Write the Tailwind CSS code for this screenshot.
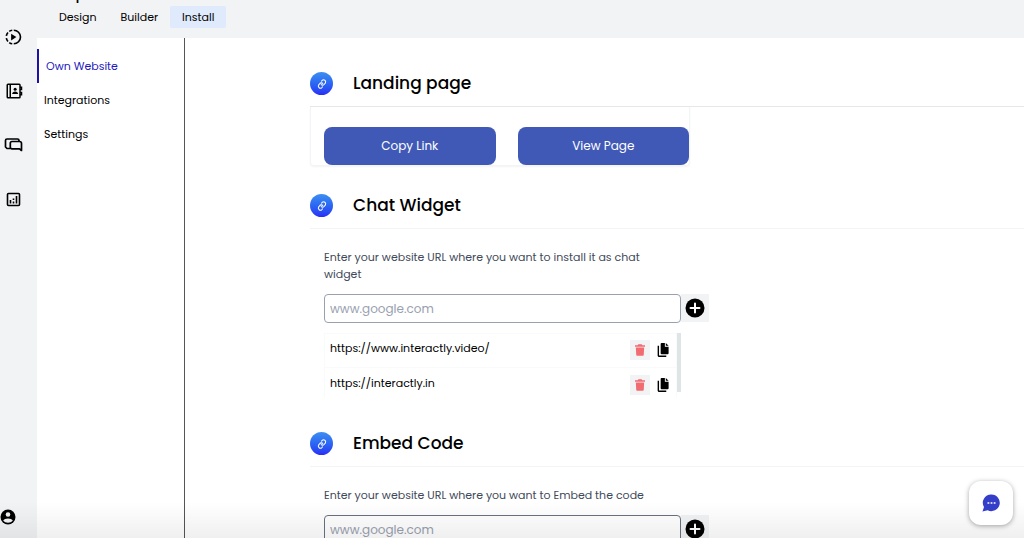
<!DOCTYPE html>
<html lang="en">
<head>
  <meta charset="UTF-8">
  <meta name="viewport" content="width=device-width, initial-scale=1.0">
  <title>Install</title>
  <script src="https://cdn.jsdelivr.net/npm/@tailwindcss/browser@4"></script>
</head>
<body class="flex h-screen overflow-hidden bg-white font-['Poppins','Inter',sans-serif] text-[11px] text-black">
  <!-- Icon rail -->
  <aside class="flex w-[37px] shrink-0 flex-col justify-between bg-[#f2f3f5] pt-7 pb-[13px]">
    <nav class="flex flex-col gap-9">
      <a href="#" aria-label="Videos" class="ml-1 block size-[18px]">
        <svg viewBox="0 0 24 24" class="size-full" fill="none" stroke="black" stroke-width="2.2">
          <path d="M13 3a9 9 0 0 1 0 18"/>
          <path d="M11 3a9 9 0 0 0-4 1.600M5.300 6a9 9 0 0 0-2.200 4.500M3.100 13.500A9 9 0 0 0 5.300 18M7 19.400a9 9 0 0 0 4 1.600"/>
          <path d="M9.500 7.500v9l7-4.500z" fill="black" stroke="none"/>
        </svg>
      </a>
      <a href="#" aria-label="Contacts" class="ml-[5px] block size-[18px]">
        <svg viewBox="0 0 24 24" class="size-full" fill="none" stroke="black" stroke-width="2">
          <rect x="3" y="3" width="17" height="18" rx="1"/>
          <path d="M7 3v18M20 7h2v3h-2M20 14h2v3h-2"/>
          <circle cx="13.500" cy="9.500" r="2" fill="black" stroke="none"/>
          <path d="M9.500 16c0-4.500 8-4.500 8 0z" fill="black" stroke="none"/>
        </svg>
      </a>
      <a href="#" aria-label="Conversations" class="ml-1 block h-[18px] w-[20px]">
        <svg viewBox="0 0 20 18" class="size-full" fill="none" stroke="black" stroke-width="1.700" stroke-linejoin="round">
          <path d="M15 5V4.500Q15 3 13.500 3H3Q1.500 3 1.500 4.500V11l1.500 1.500H6"/>
          <path d="M8 5.500H15.500Q17.500 5.500 17.500 7.500V14.500L15.500 12.800H8Q6.300 12.800 6.300 11V7.200Q6.300 5.500 8 5.500z"/>
        </svg>
      </a>
      <a href="#" aria-label="Analytics" class="ml-1 block size-[18px]">
        <svg viewBox="0 0 18 18" class="size-full" fill="none" stroke="black" stroke-width="1.600">
          <rect x="3.500" y="3.500" width="12" height="12" rx="1"/>
          <path d="M6.500 10v3.500M9.500 11.500v2M9.500 8.500v1.500M12.500 6v7.500"/>
        </svg>
      </a>
    </nav>
    <a href="#" aria-label="Account" class="block size-4">
      <svg viewBox="0 0 16 16" class="size-full">
        <circle cx="8" cy="8" r="7.500" fill="black"/>
        <circle cx="8" cy="5.500" r="2.300" fill="#f2f3f5"/>
        <path d="M3.200 11.500C4.500 8.800 11.500 8.800 12.800 11.500 10.500 14.500 5.500 14.500 3.200 11.500z" fill="#f2f3f5"/>
      </svg>
    </a>
  </aside>

  <div class="flex min-w-0 flex-1 flex-col">
    <header class="flex h-[38px] shrink-0 flex-col justify-end bg-[#f2f3f5] pb-[10px] pl-[10px]">
      <h1 class="mb-[2px] text-[15px] leading-5 font-medium">Simple</h1>
      <nav class="flex h-[22px] shrink-0 leading-[22px]">
        <a href="#" class="px-3">Design</a>
        <a href="#" class="px-3">Builder</a>
        <a href="#" class="rounded-xs bg-[#dfeafc] px-3">Install</a>
      </nav>
    </header>

    <div class="flex min-h-0 flex-1">
      <nav class="flex w-[148px] shrink-0 flex-col border-r border-[#555] pt-[11px] leading-[34px]">
        <a href="#" class="border-l-2 border-[#1d12a8] pl-[7px] text-[#2318c0]">Own Website</a>
        <a href="#" class="pl-[7px]">Integrations</a>
        <a href="#" class="pl-[7px]">Settings</a>
      </nav>

      <main class="min-w-0 flex-1 overflow-hidden pt-[34px] pl-[125px]">
        <section>
          <div class="flex items-center gap-5 border-b border-gray-200 pb-[11px]">
            <span class="flex size-[23px] items-center justify-center rounded-full bg-linear-to-b from-[#3f8ff0] to-[#2b2bf5]">
              <svg viewBox="0 0 24 24" class="size-[10px] -rotate-8" fill="none" stroke="white" stroke-width="2.500" stroke-linecap="round"><path d="M10 13a5 5 0 0 0 7.500.500l3-3a5 5 0 0 0-7-7l-1.700 1.700M14 11a5 5 0 0 0-7.500-.500l-3 3a5 5 0 0 0 7 7l1.700-1.700"/></svg>
            </span>
            <h2 class="text-[17px] leading-[23px] font-medium">Landing page</h2>
          </div>
          <div class="flex w-[380px] gap-[22px] rounded-b-sm border border-t-0 border-gray-100 pt-5 pl-[13px] shadow-xs">
            <button class="h-[38px] flex-1 rounded-lg bg-[#4059b6] text-xs text-white">Copy Link</button>
            <button class="h-[38px] flex-1 rounded-lg bg-[#4059b6] text-xs text-white">View Page</button>
          </div>
        </section>

        <section class="mt-7">
          <div class="flex items-center gap-5 border-b border-gray-100 pb-[11px]">
            <span class="flex size-[23px] items-center justify-center rounded-full bg-linear-to-b from-[#3f8ff0] to-[#2b2bf5]">
              <svg viewBox="0 0 24 24" class="size-[10px] -rotate-8" fill="none" stroke="white" stroke-width="2.500" stroke-linecap="round"><path d="M10 13a5 5 0 0 0 7.500.500l3-3a5 5 0 0 0-7-7l-1.700 1.700M14 11a5 5 0 0 0-7.500-.500l-3 3a5 5 0 0 0 7 7l1.700-1.700"/></svg>
            </span>
            <h2 class="text-[17px] leading-[23px] font-medium">Chat Widget</h2>
          </div>
          <div class="w-[399px] pt-5 pl-[14px]">
            <label for="widgetUrl" class="block w-[345px] leading-[17px] text-[#414a5a]">Enter your website URL where you want to install it as chat widget</label>
            <div class="mt-[11px] flex">
              <input id="widgetUrl" type="text" placeholder="www.google.com" class="h-[29px] min-w-0 flex-1 rounded-sm border border-gray-400 bg-white px-[5px] text-xs placeholder:text-gray-400">
              <button aria-label="Add website" class="flex h-[28px] w-7 items-center bg-[#f2f3f5] pl-1">
                <svg viewBox="0 0 20 20" class="size-5"><circle cx="10" cy="10" r="9.500" fill="black"/><path d="M10 5.500v9M5.500 10h9" stroke="white" stroke-width="2" stroke-linecap="round"/></svg>
              </button>
            </div>
            <div class="mt-[10px] flex h-[64px] w-[357px] overflow-hidden">
              <ul class="flex-1">
                <li class="flex h-[35px] items-center border border-gray-50 pr-[6px] pb-[2px] pl-[5px]">
                  <span class="flex-1 pb-[2px]">https://www.interactly.video/</span>
                  <button aria-label="Delete" class="flex size-5 items-center justify-center bg-[#f2f3f5]">
                    <svg viewBox="0 0 12 14" class="h-3 w-[10px]" fill="#f26b70"><path d="M4 0h4l.7 1.200H12v2H0v-2h3.300zM1 4h10l-.5 9q-.1 1-1 1H2.500q-.9 0-1-1z"/></svg>
                  </button>
                  <button aria-label="Copy" class="ml-[6px] flex h-5 w-[14px] items-center justify-center">
                    <svg viewBox="0 0 12 15" class="h-[14px] w-3"><path d="M3.500 1q0-1 1-1H8v4h4v7q0 1-1 1H4.500q-1 0-1-1zM9 0l3 3H9z"/><path d="M1 3v10.300q0 .9.900.9H9.500" fill="none" stroke="black" stroke-width="1.500"/></svg>
                  </button>
                </li>
                <li class="flex h-[35px] items-center border-x border-gray-50 pr-[6px] pb-[2px] pl-[5px]">
                  <span class="flex-1 pb-[2px]">https://interactly.in</span>
                  <button aria-label="Delete" class="flex size-5 items-center justify-center bg-[#f2f3f5]">
                    <svg viewBox="0 0 12 14" class="h-3 w-[10px]" fill="#f26b70"><path d="M4 0h4l.7 1.200H12v2H0v-2h3.300zM1 4h10l-.5 9q-.1 1-1 1H2.500q-.9 0-1-1z"/></svg>
                  </button>
                  <button aria-label="Copy" class="ml-[6px] flex h-5 w-[14px] items-center justify-center">
                    <svg viewBox="0 0 12 15" class="h-[14px] w-3"><path d="M3.500 1q0-1 1-1H8v4h4v7q0 1-1 1H4.500q-1 0-1-1zM9 0l3 3H9z"/><path d="M1 3v10.300q0 .9.900.9H9.500" fill="none" stroke="black" stroke-width="1.500"/></svg>
                  </button>
                </li>
              </ul>
              <div class="h-[59px] w-1 bg-[#dfe5e6]"></div>
            </div>
          </div>
        </section>

        <section class="mt-[35px]">
          <div class="flex items-center gap-5 border-b border-gray-100 pb-[11px]">
            <span class="flex size-[23px] items-center justify-center rounded-full bg-linear-to-b from-[#3f8ff0] to-[#2b2bf5]">
              <svg viewBox="0 0 24 24" class="size-[10px] -rotate-8" fill="none" stroke="white" stroke-width="2.500" stroke-linecap="round"><path d="M10 13a5 5 0 0 0 7.500.500l3-3a5 5 0 0 0-7-7l-1.700 1.700M14 11a5 5 0 0 0-7.500-.500l-3 3a5 5 0 0 0 7 7l1.700-1.700"/></svg>
            </span>
            <h2 class="text-[17px] leading-[23px] font-medium">Embed Code</h2>
          </div>
          <div class="w-[399px] pt-5 pl-[14px]">
            <label for="embedUrl" class="block w-[345px] leading-[17px] text-[#414a5a]">Enter your website URL where you want to Embed the code</label>
            <div class="mt-[11px] flex">
              <input id="embedUrl" type="text" placeholder="www.google.com" class="h-[29px] min-w-0 flex-1 rounded-sm border border-gray-500 bg-white px-[5px] text-xs placeholder:text-gray-400">
              <button aria-label="Add website" class="flex h-[28px] w-7 items-center bg-[#f2f3f5] pl-1">
                <svg viewBox="0 0 20 20" class="size-5"><circle cx="10" cy="10" r="9.500" fill="black"/><path d="M10 5.500v9M5.500 10h9" stroke="white" stroke-width="2" stroke-linecap="round"/></svg>
              </button>
            </div>
          </div>
        </section>
      </main>
    </div>
  </div>

  <!-- Bottom fade -->
  <div class="pointer-events-none fixed inset-x-0 bottom-0 h-9 bg-linear-to-t from-black/6 to-transparent"></div>

  <button aria-label="Open chat" class="fixed right-[11px] bottom-[13px] flex size-11 items-center justify-center rounded-xl bg-white shadow-[0_1px_5px_rgba(0,0,0,0.35)]">
    <svg viewBox="0 0 18 18" class="size-[18px]"><path d="M9.500.5a8.300 8.300 0 1 1-3.800 15.700L.5 17.500 2 13A8.300 8.300 0 0 1 9.500.5z" fill="#343ec9"/><path d="M5.500 9h1.800M8.600 9h1.800M11.700 9h1.800" stroke="white" stroke-width="1.600"/></svg>
  </button>
</body>
</html>
